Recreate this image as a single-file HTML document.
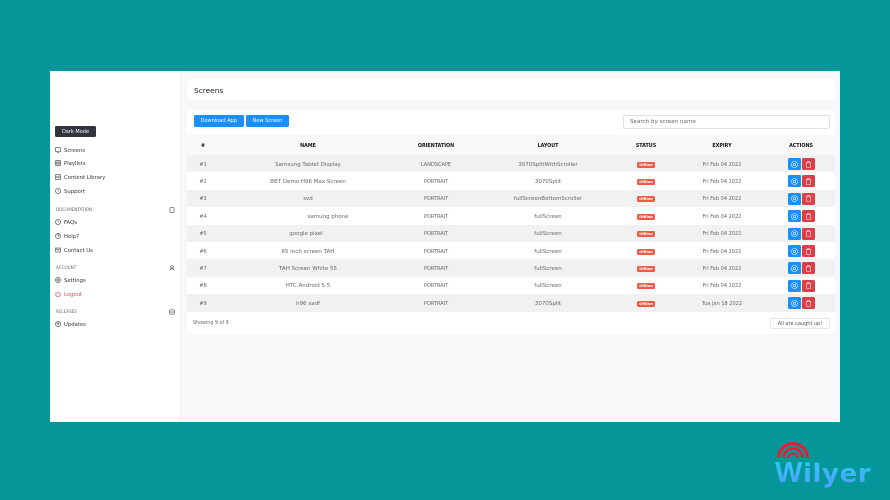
<!DOCTYPE html>
<html><head><meta charset="utf-8"><title>Screens</title>
<style>
html,body{margin:0;padding:0}
body{width:890px;height:500px;overflow:hidden;background:#05969a;position:relative;font-family:"DejaVu Sans","Liberation Sans",sans-serif;font-size:5.2px;color:#666}
div,span,svg{position:absolute;box-sizing:border-box}
#wrap{left:0;top:0;width:890px;height:500px;filter:blur(.3px)}
#app{left:50px;top:71px;width:790px;height:351px;background:#f7f8fa}
#side{left:50px;top:71px;width:131px;height:351px;background:#fff;border-right:1px solid #eef0f2}
.card{background:#fff;border-radius:5px;left:187px;width:648px}
.nav{left:64px;margin-top:.7px;font-size:5.3px;color:#333;white-space:nowrap;line-height:8px;height:8px}
.cap{left:56px;font-size:4.1px;color:#666;white-space:nowrap;line-height:6px;height:6px}
.ic{left:55px;width:6px;height:6px;fill:none;stroke:#555;stroke-width:.7}
.ic2{left:169px;width:6px;height:6px;fill:none;stroke:#555;stroke-width:.7}
.row{left:187px;width:648px;height:17.4px}
.c{text-align:center;white-space:nowrap;line-height:10px;height:10px;top:4.7px;color:#666;font-size:5px}
.n{font-size:5.5px}
.h{text-align:center;white-space:nowrap;line-height:10px;height:10px;top:7px;color:#111;font-size:4.8px;font-weight:bold}
.o{left:450px;width:18px;height:6px;top:6.500px;background:#ef5a45;border-radius:1.5px;color:#fff;font-size:3.7px;font-weight:bold;line-height:6.500px;text-align:center}
.b{width:12.500px;height:12px;top:3px;border-radius:1.5px}
.u{left:601px;background:#1890ff}
.d{left:615px;background:#dc3f45}
.b svg{left:3px;top:2.500px;width:7px;height:7px;fill:none;stroke-width:.6;stroke:#e8f2ff}
.btn{background:#1890ff;color:#fff;border-radius:1.5px;top:115px;height:12px;line-height:12.500px;font-size:5px;text-align:center;white-space:nowrap}
</style></head><body>
<div id="wrap">
<div id="app"></div>
<div id="side"></div>

<div style="left:55px;top:126px;width:41px;height:11px;background:#30343b;border-radius:1.5px;color:#fff;font-size:5px;line-height:12.500px;text-align:center">Dark Mode</div>

<svg class="ic" style="top:147px" viewBox="0 0 6 6"><rect x=".5" y=".7" width="5" height="3.6"/><path d="M2 5.4h2"/></svg><div class="nav" style="top:146px">Screens</div>
<svg class="ic" style="top:160px" viewBox="0 0 6 6"><rect x=".6" y=".6" width="4.8" height="4.8"/><path d="M2 .6v4.8M4 .6v4.8M.6 3h4.8"/></svg><div class="nav" style="top:159px">Playlists</div>
<svg class="ic" style="top:174px" viewBox="0 0 6 6"><rect x=".6" y=".6" width="4.8" height="4.8"/><path d="M.6 2.200h4.800M.6 3.800h4.800"/></svg><div class="nav" style="top:173px">Content Library</div>
<svg class="ic" style="top:188px" viewBox="0 0 6 6"><circle cx="3" cy="3" r="2.500"/><path d="M3 1.800v1.700"/></svg><div class="nav" style="top:187px">Support</div>

<div class="cap" style="top:207px">DOCUMENTATION</div>
<svg class="ic2" style="top:207px" viewBox="0 0 6 6"><path d="M1 5V1.300C1 .9 1.300.7 1.600.7H5v4.600H1.600C1.300 5.300 1 5.200 1 5z"/></svg>
<svg class="ic" style="top:219px" viewBox="0 0 6 6"><circle cx="3" cy="3" r="2.500"/><path d="M3 1.800v1.700"/></svg><div class="nav" style="top:218px">FAQs</div>
<svg class="ic" style="top:233px" viewBox="0 0 6 6"><circle cx="3" cy="3" r="2.500"/><path d="M2.200 2.300c.2-.9 1.700-.8 1.700.1 0 .6-.9.6-.9 1.200"/></svg><div class="nav" style="top:232px">Help?</div>
<svg class="ic" style="top:247px" viewBox="0 0 6 6"><rect x=".6" y="1" width="4.800" height="4"/><path d="M.6 1.400L3 3.300l2.400-1.900"/></svg><div class="nav" style="top:246px">Contact Us</div>

<div class="cap" style="top:265px">ACCOUNT</div>
<svg class="ic2" style="top:265px" viewBox="0 0 6 6"><circle cx="3" cy="2" r="1.300"/><path d="M.8 5.400c.3-2.200 4.100-2.200 4.400 0"/></svg>
<svg class="ic" style="top:277px" viewBox="0 0 6 6"><circle cx="3" cy="3" r="2.500"/><circle cx="3" cy="3" r="1"/></svg><div class="nav" style="top:276px">Settings</div>
<svg class="ic" style="top:291px;stroke:#e5474f" viewBox="0 0 6 6"><path d="M1.700 1.500a2.300 2.300 0 1 0 2.600 0M3 .5v2.500"/></svg><div class="nav" style="top:290px;color:#e5474f">Logout</div>

<div class="cap" style="top:309px">RELEASES</div>
<svg class="ic2" style="top:309px" viewBox="0 0 6 6"><rect x=".7" y=".8" width="4.600" height="4.400" rx="1"/><path d="M.7 3h4.600"/></svg>
<svg class="ic" style="top:321px" viewBox="0 0 6 6"><circle cx="3" cy="3" r="2.500"/><path d="M3 4.500V1.700M1.800 2.800L3 1.700l1.200 1.100"/></svg><div class="nav" style="top:320px">Updates</div>

<div class="card" style="top:79px;height:21px"></div>
<div style="left:194px;top:85.500px;font-size:7.400px;color:#222;line-height:10px;white-space:nowrap">Screens</div>

<div class="card" style="top:110px;height:224px"></div>
<div class="btn" style="left:193.500px;width:50.500px">Download App</div>
<div class="btn" style="left:246px;width:43px">New Screen</div>
<div style="left:623px;top:115px;width:207px;height:14px;background:#fff;border:1px solid #dfe2e6;border-radius:2px;font-size:5.600px;line-height:13.500px;padding-left:6px;color:#666;white-space:nowrap">Search by screen name</div>

<div class="row" style="top:135px;height:20px;background:#f7f8fa">
<div class="h" style="left:0;width:32px">#</div>
<div class="h" style="left:71px;width:100px">NAME</div>
<div class="h" style="left:209px;width:80px">ORIENTATION</div>
<div class="h" style="left:321px;width:80px">LAYOUT</div>
<div class="h" style="left:429px;width:60px">STATUS</div>
<div class="h" style="left:505px;width:60px">EXPIRY</div>
<div class="h" style="left:584px;width:60px">ACTIONS</div>
</div>

<div class="row" style="top:155px;background:#f1f1f1">
<div class="c" style="left:0;width:32px">#1</div><div class="c n" style="left:71px;width:100px">Samsung Tablet Display</div><div class="c" style="left:209px;width:80px">LANDSCAPE</div><div class="c n" style="left:321px;width:80px">3070SplitWithScroller</div><div class="o">Offline</div><div class="c" style="left:505px;width:60px">Fri Feb 04 2022</div>
<div class="b u"><svg viewBox="0 0 7 7"><circle cx="3.500" cy="3.500" r="3"/><circle cx="3.500" cy="3.500" r="1.200"/></svg></div><div class="b d"><svg viewBox="0 0 7 7"><path d="M1 1.500h5M2.500 1.500V.6h2v.9M1.600 1.500v5h3.800v-5"/></svg></div></div>

<div class="row" style="top:172.400px;background:#fff">
<div class="c" style="left:0;width:32px">#2</div><div class="c n" style="left:71px;width:100px">BBT Demo H96 Max Screen</div><div class="c" style="left:209px;width:80px">PORTRAIT</div><div class="c n" style="left:321px;width:80px">3070Split</div><div class="o">Offline</div><div class="c" style="left:505px;width:60px">Fri Feb 04 2022</div>
<div class="b u"><svg viewBox="0 0 7 7"><circle cx="3.500" cy="3.500" r="3"/><circle cx="3.500" cy="3.500" r="1.200"/></svg></div><div class="b d"><svg viewBox="0 0 7 7"><path d="M1 1.500h5M2.500 1.500V.6h2v.9M1.600 1.500v5h3.800v-5"/></svg></div></div>

<div class="row" style="top:189.800px;background:#f1f1f1">
<div class="c" style="left:0;width:32px">#3</div><div class="c n" style="left:71px;width:100px">svd</div><div class="c" style="left:209px;width:80px">PORTRAIT</div><div class="c n" style="left:321px;width:80px">fullScreenBottomScroller</div><div class="o">Offline</div><div class="c" style="left:505px;width:60px">Fri Feb 04 2022</div>
<div class="b u"><svg viewBox="0 0 7 7"><circle cx="3.500" cy="3.500" r="3"/><circle cx="3.500" cy="3.500" r="1.200"/></svg></div><div class="b d"><svg viewBox="0 0 7 7"><path d="M1 1.500h5M2.500 1.500V.6h2v.9M1.600 1.500v5h3.800v-5"/></svg></div></div>

<div class="row" style="top:207.200px;background:#fff">
<div class="c" style="left:0;width:32px">#4</div><div class="c n" style="left:91px;width:100px">samung phone</div><div class="c" style="left:209px;width:80px">PORTRAIT</div><div class="c n" style="left:321px;width:80px">fullScreen</div><div class="o">Offline</div><div class="c" style="left:505px;width:60px">Fri Feb 04 2022</div>
<div class="b u"><svg viewBox="0 0 7 7"><circle cx="3.500" cy="3.500" r="3"/><circle cx="3.500" cy="3.500" r="1.200"/></svg></div><div class="b d"><svg viewBox="0 0 7 7"><path d="M1 1.500h5M2.500 1.500V.6h2v.9M1.600 1.500v5h3.800v-5"/></svg></div></div>

<div class="row" style="top:224.600px;background:#f1f1f1">
<div class="c" style="left:0;width:32px">#5</div><div class="c n" style="left:69px;width:100px">google pixel</div><div class="c" style="left:209px;width:80px">PORTRAIT</div><div class="c n" style="left:321px;width:80px">fullScreen</div><div class="o">Offline</div><div class="c" style="left:505px;width:60px">Fri Feb 04 2022</div>
<div class="b u"><svg viewBox="0 0 7 7"><circle cx="3.500" cy="3.500" r="3"/><circle cx="3.500" cy="3.500" r="1.200"/></svg></div><div class="b d"><svg viewBox="0 0 7 7"><path d="M1 1.500h5M2.500 1.500V.6h2v.9M1.600 1.500v5h3.800v-5"/></svg></div></div>

<div class="row" style="top:242px;background:#fff">
<div class="c" style="left:0;width:32px">#6</div><div class="c n" style="left:71px;width:100px">65 inch screen TAH</div><div class="c" style="left:209px;width:80px">PORTRAIT</div><div class="c n" style="left:321px;width:80px">fullScreen</div><div class="o">Offline</div><div class="c" style="left:505px;width:60px">Fri Feb 04 2022</div>
<div class="b u"><svg viewBox="0 0 7 7"><circle cx="3.500" cy="3.500" r="3"/><circle cx="3.500" cy="3.500" r="1.200"/></svg></div><div class="b d"><svg viewBox="0 0 7 7"><path d="M1 1.500h5M2.500 1.500V.6h2v.9M1.600 1.500v5h3.800v-5"/></svg></div></div>

<div class="row" style="top:259.400px;background:#f1f1f1">
<div class="c" style="left:0;width:32px">#7</div><div class="c n" style="left:71px;width:100px">TAH Screen White 55</div><div class="c" style="left:209px;width:80px">PORTRAIT</div><div class="c n" style="left:321px;width:80px">fullScreen</div><div class="o">Offline</div><div class="c" style="left:505px;width:60px">Fri Feb 04 2022</div>
<div class="b u"><svg viewBox="0 0 7 7"><circle cx="3.500" cy="3.500" r="3"/><circle cx="3.500" cy="3.500" r="1.200"/></svg></div><div class="b d"><svg viewBox="0 0 7 7"><path d="M1 1.500h5M2.500 1.500V.6h2v.9M1.600 1.500v5h3.800v-5"/></svg></div></div>

<div class="row" style="top:276.800px;background:#fff">
<div class="c" style="left:0;width:32px">#8</div><div class="c n" style="left:71px;width:100px">HTC Android 5.5</div><div class="c" style="left:209px;width:80px">PORTRAIT</div><div class="c n" style="left:321px;width:80px">fullScreen</div><div class="o">Offline</div><div class="c" style="left:505px;width:60px">Fri Feb 04 2022</div>
<div class="b u"><svg viewBox="0 0 7 7"><circle cx="3.500" cy="3.500" r="3"/><circle cx="3.500" cy="3.500" r="1.200"/></svg></div><div class="b d"><svg viewBox="0 0 7 7"><path d="M1 1.500h5M2.500 1.500V.6h2v.9M1.600 1.500v5h3.800v-5"/></svg></div></div>

<div class="row" style="top:294.200px;background:#f1f1f1">
<div class="c" style="left:0;width:32px">#9</div><div class="c n" style="left:71px;width:100px">h96 sadf</div><div class="c" style="left:209px;width:80px">PORTRAIT</div><div class="c n" style="left:321px;width:80px">3070Split</div><div class="o">Offline</div><div class="c" style="left:505px;width:60px">Tue Jan 18 2022</div>
<div class="b u"><svg viewBox="0 0 7 7"><circle cx="3.500" cy="3.500" r="3"/><circle cx="3.500" cy="3.500" r="1.200"/></svg></div><div class="b d"><svg viewBox="0 0 7 7"><path d="M1 1.500h5M2.500 1.500V.6h2v.9M1.600 1.500v5h3.800v-5"/></svg></div></div>

<div style="left:193px;top:318.700px;font-size:4.800px;line-height:10px;color:#666;white-space:nowrap">Showing 9 of 9</div>
<div style="left:770px;top:318px;width:60px;height:11px;border:1px solid #e6e8eb;border-radius:2px;background:#fff;font-size:5px;line-height:10.500px;text-align:center;color:#555;white-space:nowrap">All are caught up!</div>

<svg style="left:765px;top:430px;width:125px;height:70px" viewBox="0 0 125 70">
<defs><linearGradient id="g" gradientUnits="userSpaceOnUse" x1="0" y1="32" x2="0" y2="54"><stop offset="0" stop-color="#35c4f2"/><stop offset="1" stop-color="#4aa3ff"/></linearGradient></defs>
<path d="M13.500 28a14.500 14.500 0 0 1 29 0" fill="none" stroke="#e81c33" stroke-width="3"/>
<path d="M18.500 28a9.500 9.500 0 0 1 19 0" fill="none" stroke="#e81c33" stroke-width="2.500"/>
<path d="M23.500 28a4.500 4.500 0 0 1 9 0" fill="none" stroke="#e81c33" stroke-width="2"/>
<text x="10" y="52" font-family="Liberation Sans, sans-serif" font-size="29" font-weight="bold" fill="url(#g)">W</text>
<text x="38" y="52" font-family="DejaVu Sans, sans-serif" font-size="26" font-weight="bold" letter-spacing=".6" fill="url(#g)">ilyer</text>
</svg>
</div>
</body></html>
